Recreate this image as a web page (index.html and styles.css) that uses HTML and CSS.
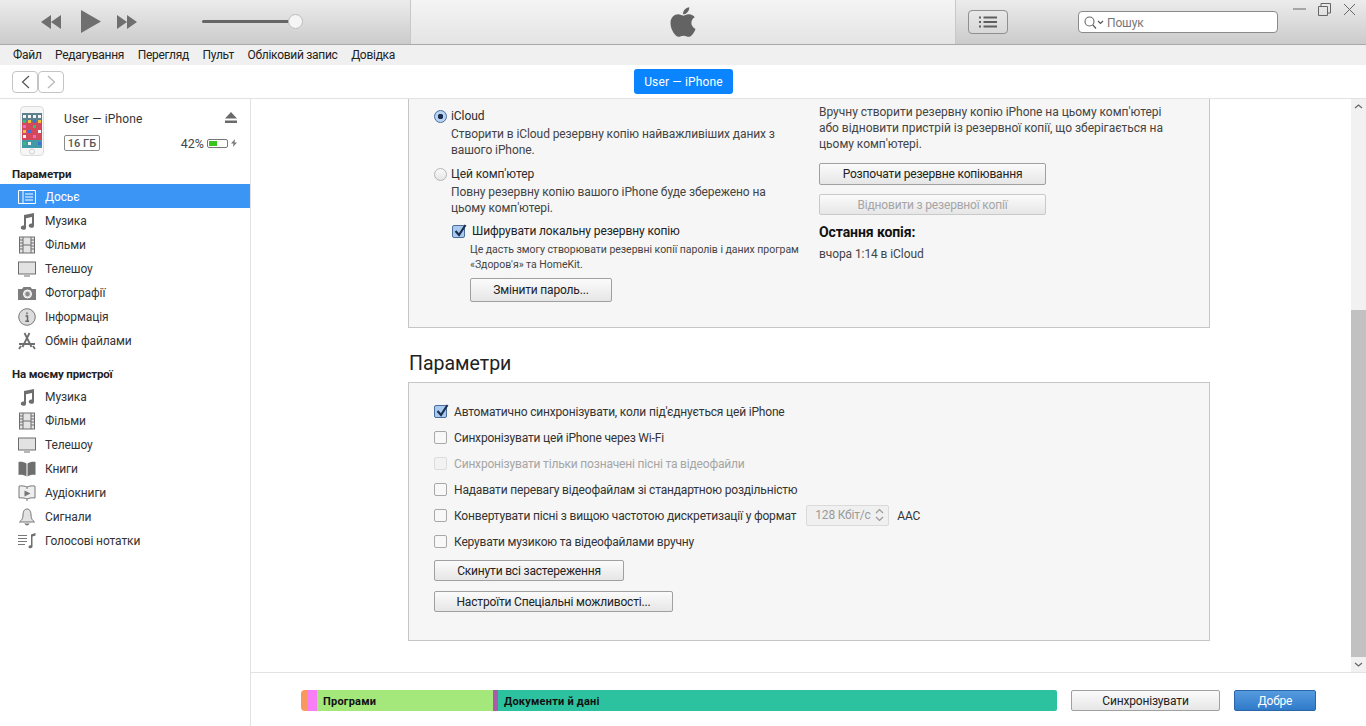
FILE: index.html
```html
<!DOCTYPE html>
<html lang="uk">
<head>
<meta charset="utf-8">
<title>iTunes</title>
<link rel="stylesheet" href="styles.css">
</head>
<body>
<svg class="defs" width="0" height="0" aria-hidden="true">
  <symbol id="i-music" viewBox="0 0 18 18"><path d="M6 3 L16 1 V13.5 A2.6 2.2 0 1 1 14 11.5 V5 L8 6.2 V15.5 A2.6 2.2 0 1 1 6 13.5 Z" fill="#6e6e6e"/></symbol>
  <symbol id="i-film" viewBox="0 0 18 18"><rect x="1.5" y="1" width="15" height="16" fill="#e4e4e4" stroke="#6e6e6e"/><path d="M5 1V17M13 1V17M5 9H13M1.5 4H5M1.5 7H5M1.5 10H5M1.5 13H5M13 4H16.5M13 7H16.5M13 10H16.5M13 13H16.5" stroke="#6e6e6e" fill="none"/></symbol>
  <symbol id="i-tv" viewBox="0 0 18 18"><rect x="0.5" y="2" width="17" height="12" fill="#e2e2e2" stroke="#6e6e6e"/><path d="M6 16H12" stroke="#6e6e6e"/></symbol>
</svg>

<header class="titlebar">
  <div class="player">
    <svg class="player-btn" width="20" height="14" viewBox="0 0 20 14"><path d="M10 0V14L0 7ZM20 0V14L10 7Z" fill="#6f6f6f"/></svg>
    <svg class="player-play" width="20" height="23" viewBox="0 0 20 23"><path d="M0 0L20 11.5L0 23Z" fill="#6f6f6f"/></svg>
    <svg class="player-btn" width="20" height="14" viewBox="0 0 20 14"><path d="M0 0L10 7L0 14ZM10 0L20 7L10 14Z" fill="#6f6f6f"/></svg>
    <div class="volume"><span class="volume-knob"></span></div>
  </div>
  <div class="lcd">
    <svg width="26" height="34" viewBox="0 0 384 512"><path fill="#636363" d="M318.7 268.7c-.2-36.7 16.4-64.4 50-84.8-18.8-26.9-47.2-41.7-84.7-44.6-35.5-2.8-74.3 20.7-88.5 20.7-15 0-49.4-19.7-76.4-19.7C63.3 141.2 4 184.8 4 273.5q0 39.3 14.4 81.2c12.8 36.7 59 126.7 107.2 125.2 25.2-.6 43-17.9 75.8-17.9 31.8 0 48.3 17.9 76.4 17.9 48.6-.7 90.4-82.5 102.6-119.3-65.2-30.7-61.7-90-61.7-91.9zm-56.6-164.2c27.3-32.4 24.8-61.9 24-72.5-24.1 1.4-52 16.4-67.9 34.9-17.5 19.8-27.8 44.3-25.6 71.9 26.1 2 49.9-11.4 69.5-34.3z"/></svg>
  </div>
  <div class="tools">
    <button class="list-btn"><svg width="18" height="12" viewBox="0 0 18 12"><path d="M0 1.5H2M0 6H2M0 10.5H2M4.500 1.500H18M4.500 6H18M4.500 10.500H18" stroke="#5f5f5f" stroke-width="1.800"/></svg></button>
    <div class="search">
      <svg width="20" height="13" viewBox="0 0 20 13"><circle cx="5.500" cy="5.500" r="4.500" fill="none" stroke="#666" stroke-width="1.100"/><path d="M8.800 8.800L12 12.500M14 5L16.500 7.500L19 5" stroke="#555" stroke-width="1.200" fill="none"/></svg>
      <span class="search-text">Пошук</span>
    </div>
    <div class="winctl">
      <svg width="13" height="13" viewBox="0 0 13 13"><path d="M0 6H13" stroke="#666"/></svg>
      <svg width="13" height="13" viewBox="0 0 13 13"><path d="M0.500 3.500H9.500V12.500H0.500ZM3 3.500V0.500H12.500V10H9.500" fill="none" stroke="#666"/></svg>
      <svg width="13" height="13" viewBox="0 0 13 13"><path d="M1 1L12 12M12 1L1 12" stroke="#666"/></svg>
    </div>
  </div>
</header>

<nav class="menubar">
  <span>Файл</span><span>Редагування</span><span>Перегляд</span><span>Пульт</span><span>Обліковий запис</span><span>Довідка</span>
</nav>

<div class="navbar">
  <div class="nav-arrows">
    <button class="arrow"><svg width="9" height="14" viewBox="0 0 9 14"><path d="M8 1L1.500 7L8 13" fill="none" stroke="#555" stroke-width="1.200"/></svg></button>
    <button class="arrow"><svg width="9" height="14" viewBox="0 0 9 14"><path d="M1 1L7.500 7L1 13" fill="none" stroke="#b5b5b5" stroke-width="1.200"/></svg></button>
  </div>
  <div class="device-tab">User — iPhone</div>
</div>

<div class="workspace">
  <aside class="sidebar">
    <div class="device">
      <svg class="phone" width="24" height="50" viewBox="0 0 24 50">
        <rect x="0.500" y="0.500" width="23" height="49" rx="3.500" fill="#f6f6f6" stroke="#dcdcdc"/>
        <rect x="2" y="7" width="20" height="35" fill="#d4485c"/>
        <rect x="2" y="7" width="20" height="9" fill="#5e7f8f"/>
        <rect x="2" y="34" width="20" height="8" fill="#3f9aa5"/>
        <g fill="#f4f4f4"><rect x="3" y="9" width="3" height="3"/><rect x="8" y="9" width="3" height="3"/><rect x="13" y="9" width="3" height="3"/><rect x="18" y="9" width="3" height="3"/><rect x="3" y="29" width="3" height="3"/><rect x="18" y="24" width="3" height="3"/><rect x="8" y="36" width="3" height="3"/></g>
        <g fill="#35c06a"><rect x="3" y="14" width="3" height="3"/><rect x="13" y="19" width="3" height="3"/><rect x="3" y="36" width="3" height="3"/></g>
        <g fill="#f0c23c"><rect x="8" y="14" width="3" height="3"/><rect x="18" y="14" width="3" height="3"/><rect x="3" y="24" width="3" height="3"/></g>
        <g fill="#3d6fd8"><rect x="13" y="14" width="3" height="3"/><rect x="8" y="24" width="3" height="3"/><rect x="18" y="36" width="3" height="3"/></g>
        <g fill="#e86ec8"><rect x="3" y="19" width="3" height="3"/><rect x="13" y="29" width="3" height="3"/></g>
        <circle cx="12" cy="45.500" r="2.500" fill="none" stroke="#cfcfcf"/>
      </svg>
      <div class="device-info">
        <div class="device-top">
          <span class="device-name">User — iPhone</span>
          <svg width="12" height="11" viewBox="0 0 12 11"><path d="M6 0L12 6.500H0ZM0 8.500H12V11H0Z" fill="#6a6a6a"/></svg>
        </div>
        <div class="device-bottom">
          <span class="capacity">16 ГБ</span>
          <span class="battery-text">42%</span>
          <span class="battery"><span class="battery-level"></span></span>
          <svg width="6" height="8" viewBox="0 0 6 8"><path d="M4 0L0 4.500H2.500L2 8L6 3.500H3.500Z" fill="#777"/></svg>
        </div>
      </div>
    </div>

    <h3 class="side-head">Параметри</h3>
    <ul class="side-list">
      <li class="selected"><svg width="18" height="18" viewBox="0 0 18 18"><path d="M0.500 2.500H17.500V15.500H0.500ZM5 2.500V15.500M7 6H15M7 9H15M7 12H15" fill="none" stroke="#fff"/></svg>Досьє</li>
      <li><svg width="18" height="18"><use href="#i-music"/></svg>Музика</li>
      <li><svg width="18" height="18"><use href="#i-film"/></svg>Фільми</li>
      <li><svg width="18" height="18"><use href="#i-tv"/></svg>Телешоу</li>
      <li><svg width="18" height="18" viewBox="0 0 18 18"><path d="M0 5H4L5.500 3H12.500L14 5H18V16H0Z" fill="#7d7d7d"/><circle cx="9.500" cy="10" r="4" fill="#d8d8d8" stroke="#fff"/><circle cx="9.500" cy="10" r="2.200" fill="#8a8a8a"/></svg>Фотографії</li>
      <li><svg width="18" height="18" viewBox="0 0 18 18"><circle cx="9" cy="9" r="8.300" fill="#dcdcdc" stroke="#777"/><path d="M9 4.500V6.200M7.500 8H9.500V13M7.300 13.300H11" stroke="#666" stroke-width="1.500" fill="none"/></svg>Інформація</li>
      <li><svg width="18" height="18" viewBox="0 0 18 18"><path d="M6.500 1L13.500 15M11.500 1L4.500 15M1 12H17M1 17L3 14M17 17L15 14" stroke="#6e6e6e" stroke-width="1.800" fill="none"/></svg>Обмін файлами</li>
    </ul>

    <h3 class="side-head side-head-second">На моєму пристрої</h3>
    <ul class="side-list">
      <li><svg width="18" height="18"><use href="#i-music"/></svg>Музика</li>
      <li><svg width="18" height="18"><use href="#i-film"/></svg>Фільми</li>
      <li><svg width="18" height="18"><use href="#i-tv"/></svg>Телешоу</li>
      <li><svg width="18" height="18" viewBox="0 0 18 18"><path d="M8.500 3.500C6.500 2 3 1.500 0.500 2V15C3 14.500 6.500 15 8.500 16.500ZM9.500 3.500C11.500 2 15 1.500 17.500 2V15C15 14.500 11.500 15 9.500 16.500Z" fill="#6e6e6e"/></svg>Книги</li>
      <li><svg width="18" height="18" viewBox="0 0 18 18"><path d="M9 3C7 2 3 1.500 1 2.200V14C3 13.500 7 14 9 15C11 14 15 13.500 17 14V2.200C15 1.500 11 2 9 3ZM9 3V5M9 15V17" fill="#eee" stroke="#777"/><path d="M6.500 6.500L12.500 9.500L6.500 12.500Z" fill="#777"/></svg>Аудіокниги</li>
      <li><svg width="18" height="18" viewBox="0 0 18 18"><path d="M9 1C6 1 5 4 5 7C5 11 3.500 12 1.500 14H16.500C14.500 12 13 11 13 7C13 4 12 1 9 1Z" fill="#e2e2e2" stroke="#777"/><path d="M7 15.500C7.500 17.500 10.500 17.500 11 15.500" fill="#777" stroke="#777"/></svg>Сигнали</li>
      <li><svg width="18" height="18" viewBox="0 0 18 18"><path d="M0 3.500H9M0 6.500H9M0 9.500H9M0 12.500H7" stroke="#777"/><path d="M13 2.500L17.500 1V3.500L14.500 4.500V14.500C14.500 16.500 10.500 17 10.500 15C10.500 13.500 12 13 13 13.200Z" fill="#6e6e6e"/></svg>Голосові нотатки</li>
    </ul>
  </aside>

  <main class="content">
    <div class="scroll-area">
      <div class="pages">
        <section class="panel panel-backup">
          <div class="backup-left">
            <label class="choice"><span class="radio radio-on"></span>iCloud</label>
            <p class="choice-note">Створити в iCloud резервну копію найважливіших даних з<br>вашого iPhone.</p>
            <label class="choice choice-second"><span class="radio"></span>Цей комп'ютер</label>
            <p class="choice-note">Повну резервну копію вашого iPhone буде збережено на<br>цьому комп'ютері.</p>
            <div class="encrypt">
              <label class="encrypt-label"><span class="check check-on"><svg width="14" height="14" viewBox="0 0 14 14"><path d="M2.500 7L6 11L12.500 1" fill="none" stroke="#1d2f4f" stroke-width="2.200"/></svg></span>Шифрувати локальну резервну копію</label>
              <p class="encrypt-note">Це дасть змогу створювати резервні копії паролів і даних програм<br>«Здоров'я» та HomeKit.</p>
              <button class="btn btn-password">Змінити пароль...</button>
            </div>
          </div>
          <div class="backup-right">
            <p class="manual">Вручну створити резервну копію iPhone на цьому комп'ютері<br>або відновити пристрій із резервної копії, що зберігається на<br>цьому комп'ютері.</p>
            <button class="btn btn-wide">Розпочати резервне копіювання</button>
            <button class="btn btn-wide btn-disabled">Відновити з резервної копії</button>
            <h4 class="last-title">Остання копія:</h4>
            <p class="last-value">вчора 1:14 в iCloud</p>
          </div>
        </section>

        <h2 class="section-title">Параметри</h2>
        <section class="panel panel-options">
          <label class="option"><span class="check check-on"><svg width="14" height="14" viewBox="0 0 14 14"><path d="M2.500 7L6 11L12.500 1" fill="none" stroke="#1d2f4f" stroke-width="2.200"/></svg></span>Автоматично синхронізувати, коли під'єднується цей iPhone</label>
          <label class="option"><span class="check"></span>Синхронізувати цей iPhone через Wi-Fi</label>
          <label class="option option-disabled"><span class="check"></span>Синхронізувати тільки позначені пісні та відеофайли</label>
          <label class="option"><span class="check"></span>Надавати перевагу відеофайлам зі стандартною роздільністю</label>
          <label class="option"><span class="check"></span>Конвертувати пісні з вищою частотою дискретизації у формат
            <span class="select">128 Кбіт/с<svg width="9" height="14" viewBox="0 0 9 14"><path d="M1 5L4.500 1.500L8 5M1 9L4.500 12.500L8 9" fill="none" stroke="#999" stroke-width="1.200"/></svg></span>
            <span class="aac">AAC</span></label>
          <label class="option"><span class="check"></span>Керувати музикою та відеофайлами вручну</label>
          <button class="btn btn-reset">Скинути всі застереження</button>
          <button class="btn btn-access">Настроїти Спеціальні можливості...</button>
        </section>
      </div>
      <div class="scrollbar">
        <svg class="scroll-arrow" width="15" height="15" viewBox="0 0 15 15"><path d="M4 9L7.500 6L11 9" fill="none" stroke="#666" stroke-width="1.200"/></svg>
        <div class="scroll-track"><div class="scroll-thumb"></div></div>
        <svg class="scroll-arrow" width="15" height="15" viewBox="0 0 15 15"><path d="M4 6L7.500 9L11 6" fill="none" stroke="#666" stroke-width="1.200"/></svg>
      </div>
    </div>
    <footer class="footer">
      <div class="storage">
        <span class="seg seg-orange"></span>
        <span class="seg seg-pink"></span>
        <span class="seg seg-green">Програми</span>
        <span class="seg seg-purple"></span>
        <span class="seg seg-teal">Документи й дані</span>
      </div>
      <button class="btn btn-sync">Синхронізувати</button>
      <button class="btn btn-done">Добре</button>
    </footer>
  </main>
</div>
</body>
</html>
```

FILE: styles.css
```css
* { box-sizing: border-box; }
html, body { margin: 0; height: 100%; overflow: hidden; }
body {
  width: 1366px;
  height: 726px;
  display: flex;
  flex-direction: column;
  font-family: Roboto, "Noto Sans", sans-serif;
  font-size: 12px;
  color: #2b2b2b;
  background: #fff;
}
.defs { position: absolute; }
p, h2, h3, h4, ul { margin: 0; padding: 0; }
ul { list-style: none; }
button { font: inherit; color: inherit; padding: 0; cursor: default; }
svg { display: block; flex: none; }

.titlebar {
  height: 45px;
  flex: none;
  display: flex;
  border-bottom: 1px solid #a9a9a9;
  background: linear-gradient(#ececec, #cbcbcb);
}
.player {
  width: 411px;
  display: flex;
  align-items: center;
  padding-left: 41px;
  padding-bottom: 1px;
  border-right: 1px solid #c8c8c8;
}
.player-play { margin: 0 16px 0 20px; }
.volume {
  width: 88px;
  height: 3px;
  margin-left: 65px;
  background: #666;
  border-radius: 2px;
  display: flex;
  align-items: center;
  justify-content: flex-end;
}
.volume-knob {
  width: 15px;
  height: 15px;
  flex: none;
  margin-right: -13px;
  border-radius: 50%;
  background: #f5f5f5;
  border: 1px solid #bdbdbd;
}
.lcd {
  width: 544px;
  display: flex;
  align-items: center;
  justify-content: center;
  background: linear-gradient(#f4f4f4, #e4e4e4);
  padding: 0 0 1px 0;
}
.tools {
  flex: 1;
  display: flex;
  border-left: 1px solid #c8c8c8;
  padding-left: 12px;
}
.list-btn {
  width: 40px;
  height: 24px;
  margin-top: 10px;
  border: 1px solid #8f8f8f;
  border-radius: 4px;
  background: linear-gradient(#e8e8e8, #d8d8d8);
  display: flex;
  align-items: center;
  justify-content: center;
}
.search {
  width: 200px;
  height: 22px;
  margin: 11px 0 0 70px;
  padding-left: 5px;
  border: 1px solid #8a8a8a;
  border-radius: 4px;
  background: #fff;
  display: flex;
  align-items: center;
  gap: 3px;
  color: #777;
}
.search-text { padding-top: 2px; letter-spacing: -0.15px; }
.winctl {
  display: flex;
  gap: 12px;
  margin: 3px 0 0 15px;
}

.menubar {
  height: 20px;
  flex: none;
  background: #f0f0f0;
  display: flex;
  align-items: center;
  gap: 13.500px;
  padding-left: 13px;
  color: #222;
  letter-spacing: -0.28px;
}

.navbar {
  height: 34px;
  flex: none;
  display: flex;
  align-items: center;
  position: relative;
  padding-left: 12px;
  border-bottom: 1px solid #e2e2e2;
}
.nav-arrows { display: flex; }
.arrow {
  width: 26px;
  height: 22px;
  border: 1px solid #c4c4c4;
  border-radius: 4px;
  background: #fff;
  display: flex;
  align-items: center;
  justify-content: center;
}
.device-tab {
  width: 99px;
  height: 25px;
  margin-left: 570px;
  border-radius: 3px;
  background: #0a84ff;
  color: #fff;
  display: flex;
  align-items: center;
  justify-content: center;
  letter-spacing: 0.15px;
}

.workspace { flex: 1; display: flex; min-height: 0; }
.sidebar {
  width: 251px;
  flex: none;
  border-right: 1px solid #e2e2e2;
}
.device {
  height: 68px;
  display: flex;
  padding: 7px 13px 0 20px;
}
.device-info { flex: 1; margin-left: 20px; }
.device-top {
  display: flex;
  justify-content: space-between;
  padding-top: 6px;
  height: 29px;
  color: #333;
}
.device-name { letter-spacing: 0.15px; }
.device-bottom {
  display: flex;
  align-items: center;
  gap: 3px;
  height: 16px;
  color: #444;
}
.capacity {
  width: 36px;
  height: 16px;
  margin-right: auto;
  border: 1px solid #8a8a8a;
  border-radius: 2px;
  font-size: 11px;
  font-weight: 500;
  color: #555;
  display: flex;
  align-items: center;
  justify-content: center;
}
.battery-text { font-size: 12.500px; }
.battery {
  width: 21px;
  height: 9px;
  border: 1px solid #777;
  border-radius: 2px;
  padding: 1px;
  display: block;
}
.battery-level { display: block; width: 8px; height: 100%; background: #3ac41e; }
.side-head {
  font-size: 11.500px;
  font-weight: 700;
  color: #222;
  padding-left: 12px;
  height: 17px;
  line-height: 15px;
  letter-spacing: -0.15px;
}
.side-head-second { margin-top: 15px; }
.side-list li {
  height: 24px;
  display: flex;
  align-items: center;
  gap: 9px;
  padding: 1px 0 0 18px;
  color: #333;
  letter-spacing: -0.1px;
}
.side-list li.selected { background: #3b95f5; color: #fff; }

.content { flex: 1; min-width: 0; display: flex; flex-direction: column; }
.scroll-area { flex: 1; min-height: 0; display: flex; }
.pages { flex: 1; padding-left: 157px; }
.panel {
  width: 802px;
  background: #f6f6f6;
  border: 1px solid #c6c6c6;
}
.panel-backup {
  height: 229px;
  border-top: 0;
  display: flex;
  padding-left: 25px;
  letter-spacing: -0.09px;
}
.backup-left { width: 385px; padding-top: 8px; }
.choice { display: flex; align-items: center; gap: 4px; height: 18px; margin-left: 0; }
.choice-second { margin-top: 7px; }
.choice-note { margin: 1px 0 0 17px; line-height: 16px; color: #444; }
.radio {
  width: 13px;
  height: 13px;
  border-radius: 50%;
  border: 1px solid #b5b5b5;
  background: linear-gradient(#fafafa, #e5e5e5);
  flex: none;
}
.radio-on {
  border-color: #4b6d9e;
  background: radial-gradient(circle, #1d2f4f 0 2.500px, #b9d3f2 3px);
}
.encrypt { margin: 6px 0 0 18px; }
.encrypt-label { display: flex; align-items: center; gap: 7px; height: 18px; color: #222; letter-spacing: -0.12px; }
.check {
  width: 13px;
  height: 13px;
  border: 1px solid #a8a8a8;
  border-radius: 2px;
  background: #f8f8f8;
  flex: none;
  display: block;
}
.check-on { background: #a9c9ee; border-color: #4b6d9e; }
.check-on svg { margin: -2px 0 0 0; }
.encrypt-note { font-size: 10.500px; line-height: 15px; color: #444; margin: 2px 0 0 18px; letter-spacing: -0.03px; }
.btn {
  height: 22px;
  border: 1px solid #a0a0a0;
  border-radius: 2px;
  background: linear-gradient(#fbfbfb, #e6e6e6);
  display: block;
  color: #222;
  letter-spacing: -0.18px;
}
.btn-password { width: 142px; height: 24px; margin: 6px 0 0 18px; }
.backup-right { flex: 1; padding-top: 5px; }
.manual { line-height: 16px; color: #444; letter-spacing: -0.03px; }
.btn-wide { width: 227px; }
.backup-right .btn-wide { margin-top: 11px; }
.backup-right .btn-wide + .btn-wide { margin-top: 9px; }
.btn-disabled { border-color: #c9c9c9; color: #a5a5a5; height: 21px; }
.last-title { font-size: 14px; font-weight: 700; color: #111; margin-top: 8px; line-height: 19px; }
.last-value { margin-top: 4px; color: #444; line-height: 16px; }

.section-title {
  font-size: 19.500px;
  font-weight: 400;
  color: #222;
  margin: 22px 0 5px 1px;
  line-height: 27px;
}
.panel-options { height: 259px; padding: 15px 25px 0; }
.option {
  height: 26px;
  padding-top: 2px;
  display: flex;
  align-items: center;
  gap: 7px;
  color: #333;
  letter-spacing: -0.18px;
}
.option .check { margin-top: -2px; }
.option-disabled { color: #a5a5a5; }
.option-disabled .check { border-color: #dcdcdc; background: #f2f2f2; }
.select {
  width: 83px;
  height: 21px;
  margin: -2px 0 0 3px;
  border: 1px solid #dadada;
  border-radius: 2px;
  background: #f0f0f0;
  color: #9a9a9a;
  display: flex;
  align-items: center;
  justify-content: space-between;
  padding: 0 4px 0 8px;
}
.aac { margin-left: 1px; }
.btn-reset { width: 190px; height: 21px; margin-top: 6px; }
.btn-access { width: 239px; height: 21px; margin-top: 10px; }

.scrollbar {
  width: 15px;
  flex: none;
  margin-left: auto;
  display: flex;
  flex-direction: column;
  background: #f1f1f1;
}
.scroll-track { flex: 1; padding-top: 196px; }
.scroll-thumb { height: 347px; background: #c1c1c1; }
.footer {
  height: 54px;
  flex: none;
  border-top: 1px solid #e2e2e2;
  display: flex;
  align-items: flex-start;
  padding: 17px 0 0 50px;
}
.storage {
  width: 756px;
  height: 21px;
  display: flex;
  font-size: 11px;
  font-weight: 700;
  color: #111;
  letter-spacing: 0.22px;
}
.seg { display: flex; align-items: center; padding-top: 1px; }
.seg-orange { width: 6px; background: #f8985f; border-radius: 4px 0 0 4px; }
.seg-pink { width: 10px; background: #f97df6; }
.seg-green { width: 176px; background: #a4e87c; padding-left: 6px; }
.seg-purple { width: 5px; background: #ab5aac; }
.seg-teal { flex: 1; background: #2cc2a0; border-radius: 0 2px 2px 0; padding-left: 6px; }
.btn-sync { width: 149px; height: 21px; margin-left: 14px; }
.btn-done {
  width: 82px;
  height: 21px;
  margin-left: 14px;
  border-color: #2a65a8;
  background: linear-gradient(#569bdf, #2f7ac9);
  color: #fff;
}
```
